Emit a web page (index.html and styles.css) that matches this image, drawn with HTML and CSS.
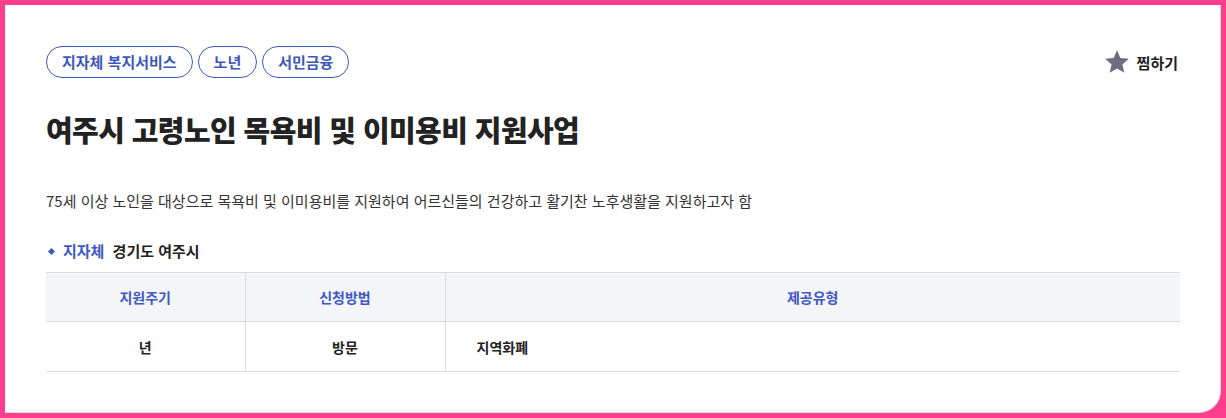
FILE: index.html
```html
<!DOCTYPE html>
<html lang="ko">

<head>
  <meta charset="utf-8" />
  <title>여주시 고령노인 목욕비 및 이미용비 지원사업</title>
  <link rel="stylesheet" href="styles.css">
</head>

<body>
  <div class="frame">
    <main class="card">
      <div class="top">
        <ul class="tags">
          <li>지자체 복지서비스</li>
          <li>노년</li>
          <li>서민금융</li>
        </ul>
        <button class="like">
          <svg width="28" height="26" viewBox="0 0 24 24"><path d="M12 1.2l3.1 7.2 7.8.7-5.9 5.2 1.8 7.7L12 18l-6.8 4 1.8-7.7-5.9-5.2 7.8-.7z" fill="#6b6d80"/></svg>
          찜하기
        </button>
      </div>

      <h1>여주시 고령노인 목욕비 및 이미용비 지원사업</h1>

      <p class="summary">75세 이상 노인을 대상으로 목욕비 및 이미용비를 지원하여 어르신들의 건강하고 활기찬 노후생활을 지원하고자 함</p>

      <div class="agency"><span class="label">지자체</span> 경기도 여주시</div>

      <table class="info">
        <tr>
          <th>지원주기</th>
          <th>신청방법</th>
          <th>제공유형</th>
        </tr>
        <tr>
          <td>년</td>
          <td>방문</td>
          <td class="left">지역화폐</td>
        </tr>
      </table>
    </main>
  </div>
</body>

</html>
```

FILE: styles.css
```css
* {
  box-sizing: border-box;
}

html,
body {
  margin: 0;
  height: 100%;
}

body {
  font-family: "Noto Sans CJK KR", "Noto Sans", sans-serif;
  color: #222;
  background-color: #ff3d8d;
}

.frame {
  height: 100%;
  padding: 5px;
}

.card {
  height: 100%;
  background-color: #fff;
  border-right: 1px solid #ddd;
  border-bottom: 1px solid #ddd;
  border-bottom-right-radius: 22px;
  padding: 41px 40px 0 41px;
}

.top {
  display: flex;
  justify-content: space-between;
  align-items: center;
}

.tags {
  display: flex;
  gap: 5px;
  margin: 0;
  padding: 0;
  list-style: none;
}

.tags li {
  height: 32px;
  line-height: 29px;
  padding: 0 15px;
  border: 1px solid #3e5bb8;
  border-radius: 16px;
  color: #3e58b8;
  font-size: 15px;
  font-weight: bold;
}

.like {
  display: flex;
  align-items: center;
  gap: 4px;
  border: 0;
  background: none;
  padding: 0;
  margin-right: 2px;
  font-family: inherit;
  font-size: 15px;
  font-weight: bold;
  color: #222;
}

.like svg {
  margin-right: 2px;
}

h1 {
  font-size: 29px;
  font-weight: 800;
  letter-spacing: -0.6px;
  margin: 31px 0 0;
  line-height: 40px;
}

.summary {
  font-size: 15px;
  color: #333;
  margin: 41px 0 0;
  line-height: 22px;
}

.agency {
  margin-top: 28px;
  font-size: 15px;
  font-weight: bold;
  line-height: 22px;
}

.agency::before {
  content: "";
  display: inline-block;
  width: 5px;
  height: 5px;
  background-color: #3e5bb8;
  transform: rotate(45deg);
  margin: 0 9px 3px 3px;
  vertical-align: middle;
}

.agency .label {
  color: #3e58c4;
  margin-right: 4px;
}

.info {
  width: 100%;
  margin-top: 10px;
  border-collapse: collapse;
  border-top: 1px solid #dcdcdf;
  font-size: 14px;
  font-weight: bold;
}

.info th,
.info td {
  border-bottom: 1px solid #dcdcdf;
  border-left: 1px solid #dcdcdf;
  text-align: center;
}

.info th:first-child,
.info td:first-child {
  border-left: 0;
  width: 199px;
}

.info th:nth-child(2),
.info td:nth-child(2) {
  width: 200px;
}

.info th {
  height: 49px;
  background-color: #f4f5f9;
  color: #3e58c4;
}

.info td {
  height: 50px;
  color: #222;
}

.info td.left {
  text-align: left;
  padding-left: 31px;
}
```
